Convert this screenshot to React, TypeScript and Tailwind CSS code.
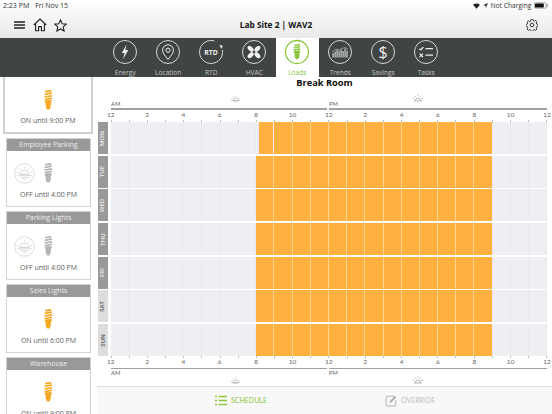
import React from "react";

const ORANGE = "#f7a823";

function Bulb({ color = ORANGE }: { color?: string }) {
  return (
    <svg width="8.5" height="20" viewBox="0 0 10 20" className="block" preserveAspectRatio="none">
      <g fill="none" stroke={color} strokeWidth="1.7" strokeLinecap="round">
        <path d="M2 1.6 L8 .9" />
        <path d="M1.4 4.3 L8.6 3.2" />
        <path d="M1.2 7 L8.8 5.8" />
        <path d="M1.6 9.6 L8.6 8.4" />
      </g>
      <path d="M1 10.4 L9 10 Q9.6 12 8 13.4 L8 16.5 Q7.5 19.6 5 19.8 Q2.5 19.6 2 16.5 L2 13.4 Q.4 12 1 10.4 Z" fill={color} />
    </svg>
  );
}

function SunCircle() {
  return (
    <svg width="21" height="21" viewBox="0 0 21 21" className="block">
      <circle cx="10.5" cy="10.5" r="9.8" fill="none" stroke="#d0d0d0" strokeWidth="0.8" />
      <path d="M6 11.5 a4.5 4.5 0 0 1 9 0 Z" fill="none" stroke="#c8c8c8" strokeWidth="0.8" />
      <g stroke="#d0d0d0" strokeWidth="0.7">
        <path d="M10.5 3.5v2M5.6 5.4l1.3 1.4M15.4 5.4l-1.3 1.4M3 9.4l1.8.6M18 9.4l-1.8.6" />
        <path d="M3 12.6h15M6 14.4h9M8 16.2h5" />
      </g>
    </svg>
  );
}

function Card({ title, status, on }: { title: string; status: string; on: boolean }) {
  return (
    <div className="shrink-0 w-[85px] ml-[6px] h-[69px] mb-[4px] border border-[#d4d4d4] bg-white flex flex-col">
      <div className="h-[12px] bg-[#999999] text-[#eeeeee] text-[7px] leading-[12px] text-center">{title}</div>
      <div className="flex-1 flex flex-col items-center pt-[12px]">
        <div className="h-[21px] flex items-center justify-center relative w-full">
          {!on && (
            <div className="absolute left-[7px] top-0">
              <SunCircle />
            </div>
          )}
          <Bulb color={on ? ORANGE : "#b5b5b5"} />
        </div>
        <div className="mt-[6px] text-[7px] leading-[10px] text-[#606060]">{status}</div>
      </div>
    </div>
  );
}

function Sidebar() {
  return (
    <div className="w-[97px] shrink-0 h-full overflow-hidden flex flex-col">
      <div className="shrink-0 ml-[3px] w-[90px] h-[56.5px] border-2 border-t-0 border-[#d0d0d0] flex flex-col items-center pt-[12.5px] mb-[4px]">
        <Bulb />
        <div className="mt-[6.5px] text-[7px] leading-[10px] text-[#606060]">ON until 9:00 PM</div>
      </div>
      <Card title="Employee Parking" status="OFF until 4:00 PM" on={false} />
      <Card title="Parking Lights" status="OFF until 4:00 PM" on={false} />
      <Card title="Sales Lights" status="ON until 6:00 PM" on />
      <Card title="Warehouse" status="ON until 9:00 PM" on />
    </div>
  );
}

function Ring({ children, color = "#d8d8d8", sw = 1 }: { children: React.ReactNode; color?: string; sw?: number }) {
  return (
    <svg width="26" height="26" viewBox="0 0 26 26" className="block">
      <circle cx="13" cy="13" r="11.5" fill="none" stroke={color} strokeWidth={sw} />
      {children}
    </svg>
  );
}

const W = "#ededed";
const tabs: { label: string; icon: React.ReactNode }[] = [
  { label: "Energy", icon: <Ring><path d="M14.5 5.5 L9.8 14 H12.6 L11 20.5 L16.2 11 H13.4 Z" fill={W} /></Ring> },
  {
    label: "Location",
    icon: (
      <Ring>
        <path d="M13 20.5 C10 16.5 7.6 14.5 7.6 11.2 A5.4 5.4 0 0 1 18.4 11.2 C18.4 14.5 16 16.5 13 20.5 Z" fill="none" stroke={W} strokeWidth="1" />
        <circle cx="13" cy="11.2" r="2.1" fill="none" stroke={W} strokeWidth="1" />
      </Ring>
    ),
  },
  {
    label: "RTD",
    icon: (
      <svg width="26" height="26" viewBox="0 0 26 26" className="block">
        <path d="M16.5 2 A11.5 11.5 0 1 0 24.4 11" fill="none" stroke="#d8d8d8" strokeWidth="1" />
        <path d="M21.2 6.2 l3.4 .4 l-.8 3.4 Z" fill={W} />
        <text x="13" y="15.6" textAnchor="middle" fontSize="6.8" fontWeight="700" fill={W} fontFamily="'Open Sans', sans-serif">RTD</text>
      </svg>
    ),
  },
  {
    label: "HVAC",
    icon: (
      <Ring>
        <g fill="#f2f2f2">
          <ellipse cx="9.6" cy="9.8" rx="3.6" ry="2.2" transform="rotate(45 9.6 9.8)" />
          <ellipse cx="16.4" cy="9.8" rx="3.6" ry="2.2" transform="rotate(-45 16.4 9.8)" />
          <ellipse cx="16.4" cy="16.2" rx="3.6" ry="2.2" transform="rotate(45 16.4 16.2)" />
          <ellipse cx="9.6" cy="16.2" rx="3.6" ry="2.2" transform="rotate(-45 9.6 16.2)" />
        </g>
      </Ring>
    ),
  },
  {
    label: "Loads",
    icon: (
      <Ring color="#8cc63f" sw={1.3}>
        <g fill="none" stroke="#8cc63f" strokeWidth="1.4" strokeLinecap="round">
          <path d="M10.6 6.4 L15.4 5.8M10.2 8.6 L15.8 7.8M10.2 10.8 L15.8 10" />
        </g>
        <path d="M9.8 11.8 L16.2 11.4 Q16.7 13 15.4 14.2 L15.4 17 Q15 20.2 13 20.3 Q11 20.2 10.6 17 L10.6 14.2 Q9.3 13 9.8 11.8 Z" fill="#8cc63f" />
      </Ring>
    ),
  },
  {
    label: "Trends",
    icon: (
      <Ring>
        <g fill="#cfcfcf">
          <rect x="5.5" y="14" width="1.2" height="4.5" />
          <rect x="7.5" y="12.5" width="1.2" height="6" />
          <rect x="9.5" y="11" width="1.2" height="7.5" />
          <rect x="11.5" y="12" width="1.2" height="6.5" />
          <rect x="13.5" y="10.5" width="1.2" height="8" />
          <rect x="15.5" y="12" width="1.2" height="6.5" />
          <rect x="17.5" y="9.5" width="1.2" height="9" />
          <rect x="19.5" y="11.5" width="1.2" height="7" />
        </g>
        <path d="M5 13 L9 10 L12 11 L15 9.5 L18 8.5 L21 10" fill="none" stroke="#cfcfcf" strokeWidth="0.6" />
      </Ring>
    ),
  },
  {
    label: "Savings",
    icon: (
      <Ring>
        <text x="13" y="19" textAnchor="middle" fontSize="16" fill={W} fontFamily="'Open Sans', sans-serif" fontWeight="400">$</text>
      </Ring>
    ),
  },
  {
    label: "Tasks",
    icon: (
      <Ring>
        <g fill="none" stroke={W} strokeWidth="1.2">
          <path d="M6.2 9.6 L7.8 11 L10.4 8" />
          <path d="M6.6 14.6 L10 18 M10 14.6 L6.6 18" />
          <path d="M12.5 9.6 H20 M12.5 16.2 H20" />
        </g>
      </Ring>
    ),
  },
];

function Nav() {
  return (
    <div className="h-[39px] shrink-0 bg-[#404443] flex justify-center pr-[0.5px]">
      <div className="flex">
        {tabs.map((t) => {
          const active = t.label === "Loads";
          return (
            <div key={t.label} className={`w-[43px] h-[39px] flex flex-col items-center pt-[1px] ${active ? "bg-white" : ""}`}>
              {t.icon}
              <div className={`mt-[3px] text-[6.6px] leading-[9px] ${active ? "text-[#8cc63f]" : "text-[#c4c4c4]"}`}>{t.label}</div>
            </div>
          );
        })}
      </div>
    </div>
  );
}

function Header() {
  return (
    <div className="h-[38px] shrink-0 bg-gradient-to-b from-white to-[#e9e9e9] flex flex-col">
      <div className="h-[12px] flex items-center justify-between pl-[3px] pr-[4px] text-[7px] text-[#333333]">
        <div className="flex gap-[6px]">
          <span>2:23 PM</span>
          <span>Fri Nov 15</span>
        </div>
        <div className="flex items-center gap-[2px] text-[6.7px]">
          <svg width="7" height="6" viewBox="0 0 14 12"><path d="M7 11.5 L0 3.5 Q7 -1.5 14 3.5 Z" fill="#222" /></svg>
          <svg width="5" height="5" viewBox="0 0 10 10" className="ml-[1px]"><path d="M10 0 L0 4.5 L5 5 L5.6 10 Z" fill="#222" /></svg>
          <span className="ml-[1px]">Not Charging</span>
          <svg width="14" height="7" viewBox="0 0 14 7" className="ml-[0.5px]">
            <rect x="0.3" y="0.8" width="12" height="5.4" rx="1.2" fill="none" stroke="#555" strokeWidth="0.5" />
            <rect x="1" y="1.5" width="8.8" height="4" rx="0.6" fill="#111" />
            <rect x="12.7" y="2.5" width="0.9" height="2" fill="#555" />
          </svg>
        </div>
      </div>
      <div className="flex-1 flex items-center pl-[14px] pr-[14px]">
        <div className="flex-1 flex items-center">
          <svg width="11" height="8" viewBox="0 0 11 8" className="block">
            <path d="M0 1h11M0 4h11M0 7h11" stroke="#222" strokeWidth="1.3" />
          </svg>
          <svg width="14" height="14" viewBox="0 0 14 14" className="ml-[8px]">
            <path d="M.8 7 L7 1 L13.2 7 M2.6 5.8 V12.8 H5.6 V8.6 H8.4 V12.8 H11.4 V5.8" fill="none" stroke="#222" strokeWidth="1.1" />
          </svg>
          <svg width="13" height="13" viewBox="0 0 13 13" className="ml-[7px]">
            <path d="M6.5 .9 L8.2 4.7 L12.3 5.1 L9.2 7.9 L10.1 12 L6.5 9.9 L2.9 12 L3.8 7.9 L.7 5.1 L4.8 4.7 Z" fill="none" stroke="#222" strokeWidth="1.1" />
          </svg>
        </div>
        <div className="text-[8.3px] font-bold text-[#111111]">Lab Site 2 | WAV2</div>
        <div className="flex-1 flex justify-end">
          <svg width="12" height="12" viewBox="0 0 24 24" className="mt-[-1px]">
            <path d="M10 1.5h4l.6 3 2.5 1 2.6-1.6 2.8 2.8-1.6 2.6 1 2.5 3 .6v4l-3 .6-1 2.5 1.6 2.6-2.8 2.8-2.6-1.6-2.5 1-.6 3h-4l-.6-3-2.5-1-2.6 1.6-2.8-2.8 1.6-2.6-1-2.5-3-.6v-4l3-.6 1-2.5L1.5 7.7l2.8-2.8 2.6 1.6 2.5-1z" transform="translate(0.6 -1) scale(0.95)" fill="none" stroke="#222" strokeWidth="1.8" />
            <circle cx="12" cy="12" r="3.6" fill="none" stroke="#222" strokeWidth="1.8" />
          </svg>
        </div>
      </div>
    </div>
  );
}

const HOUR = 436.4 / 24;
const days: { d: string; start: number; weekend?: boolean }[] = [
  { d: "MON", start: 8.15 },
  { d: "TUE", start: 8 },
  { d: "WED", start: 8 },
  { d: "THU", start: 8 },
  { d: "FRI", start: 8 },
  { d: "SAT", start: 8, weekend: true },
  { d: "SUN", start: 8, weekend: true },
];

function Row({ d, start, weekend }: { d: string; start: number; weekend?: boolean }) {
  return (
    <div className="flex h-[32px] mt-[1.7px] first:mt-0 shrink-0">
      <div className={`w-[10.5px] ml-[0.5px] mr-[2.7px] flex items-center justify-center ${weekend ? "bg-[#dddddd] text-[#555555]" : "bg-[#999999] text-[#eeeeee]"}`}>
        <span className="text-[6px] font-semibold -rotate-90 whitespace-nowrap">{d}</span>
      </div>
      <div className="w-[436.4px] relative flex bg-[#eeeef3]">
        <div style={{ width: start * HOUR }} />
        <div className="bg-[#ffb03f]" style={{ width: (21 - start) * HOUR }} />
        <div className="absolute inset-0 flex">
          {Array.from({ length: 24 }, (_, i) => (
            <div key={i} className={`flex-1 border-r ${i >= start && i < 20 ? "border-[#ffd591]" : "border-[#e9e9ef]"}`} />
          ))}
        </div>
      </div>
    </div>
  );
}

function Hours() {
  const labels = [12, 2, 4, 6, 8, 10, 12, 2, 4, 6, 8, 10, 12];
  return (
    <div className="flex ml-[-4.5px] w-[473px] h-[8px] text-[6.5px] leading-[8px] text-[#666666] shrink-0" style={{ fontFamily: "Lato, sans-serif" }}>
      {labels.map((l, i) => (
        <div key={i} className="w-[36.36px] shrink-0 text-center">{l}</div>
      ))}
    </div>
  );
}

function Ticks() {
  return (
    <div className="flex justify-between w-[436.4px] ml-[13.7px] h-[2px] shrink-0">
      {Array.from({ length: 25 }, (_, i) => (
        <div key={i} className="w-[1px] h-[2px] bg-[#bbbbbb]" />
      ))}
    </div>
  );
}

function AxisLine() {
  return (
    <div className="flex ml-[14px] h-[1.5px] shrink-0 gap-[1.5px]">
      <div className="w-[216px] bg-[#a0a0a0]" />
      <div className="w-[218px] bg-[#a0a0a0]" />
    </div>
  );
}

function AmPm({ top }: { top?: boolean }) {
  return (
    <div className={`flex ml-[14px] text-[5.8px] text-[#666666] shrink-0 ${top ? "h-[6px] leading-[4px]" : "h-[6.5px] leading-[8px]"}`} style={{ fontFamily: "Lato, sans-serif" }}>
      <span className="w-[218px]">AM</span>
      <span>PM</span>
    </div>
  );
}

function Moon() {
  return (
    <svg width="9" height="7" viewBox="0 0 18 14">
      <path d="M4 11 A5 5 0 0 1 14 11 M1 11 H17 M5 13.2 H13" fill="none" stroke="#999" strokeWidth="1.1" />
      <path d="M9 1v2.5M3.5 3l1.6 2M14.5 3l-1.6 2M0 7.5l2.4 .8M18 7.5l-2.4 .8" stroke="#999" strokeWidth="1" />
    </svg>
  );
}

function SunIcon() {
  return (
    <svg width="10" height="8" viewBox="0 0 20 16">
      <path d="M2 14 H18 M5 14 A5 6 0 0 1 15 14" fill="none" stroke="#888" strokeWidth="1.2" />
      <path d="M10 1v3M3.5 3.5l2 2.2M16.5 3.5l-2 2.2M0 9h3M17 9h3" stroke="#888" strokeWidth="1.2" />
    </svg>
  );
}

function SunRow() {
  return (
    <div className="flex items-center h-[8px] ml-[133.5px] shrink-0">
      <Moon />
      <div className="w-[173px]" />
      <SunIcon />
    </div>
  );
}

function Footer() {
  return (
    <div className="h-[28px] shrink-0 border-t border-[#dddddd] bg-[#f8f8f8] flex items-center text-[7px]" style={{ fontFamily: "Lato, sans-serif" }}>
      <svg width="12" height="11" viewBox="0 0 12 11" className="ml-[118px]">
        <g stroke="#8cc63f" strokeWidth="1.6">
          <path d="M0 1.5h2M0 5.5h2M0 9.5h2" />
          <path d="M3.5 1.5H12M3.5 5.5H12M3.5 9.5H12" />
        </g>
      </svg>
      <span className="ml-[4px] text-[#8cc63f]">SCHEDULE</span>
      <svg width="12" height="12" viewBox="0 0 12 12" className="ml-[118px]">
        <path d="M9 1.2 H2 A1 1 0 0 0 1 2.2 V10 A1 1 0 0 0 2 11 H9.8 A1 1 0 0 0 10.8 10 V5" fill="none" stroke="#aaa" strokeWidth="0.9" />
        <path d="M4.5 7.8 L5 6 L10 1 L11.3 2.3 L6.3 7.3 Z" fill="#aaa" />
      </svg>
      <span className="ml-[4px] text-[#c0c0c0]">OVERRIDE</span>
    </div>
  );
}

export default function App() {
  return (
    <div className="w-[552px] h-[414px] overflow-hidden bg-white flex flex-col" style={{ fontFamily: "'Open Sans', sans-serif" }}>
      <Header />
      <Nav />
      <div className="flex-1 flex min-h-0">
        <Sidebar />
        <div className="flex-1 min-w-0 flex flex-col overflow-hidden">
          <div className="h-[11px] shrink-0 text-center text-[9.3px] leading-[11px] font-bold text-[#111111]">Break Room</div>
          <div className="h-[6px] shrink-0" />
          <SunRow />
          <AmPm top />
          <AxisLine />
          <div className="h-[1px] shrink-0" />
          <Hours />
          <div className="h-[1.5px] shrink-0" />
          <Ticks />
          <div className="flex flex-col shrink-0">
            {days.map((x) => (
              <Row key={x.d} {...x} />
            ))}
          </div>
          <Ticks />
          <div className="h-[0.3px] shrink-0" />
          <Hours />
          <div className="h-[1.5px] shrink-0" />
          <AxisLine />
          <AmPm />
          <div className="h-[0.5px] shrink-0" />
          <SunRow />
          <div className="flex-1" />
          <Footer />
        </div>
      </div>
    </div>
  );
}
